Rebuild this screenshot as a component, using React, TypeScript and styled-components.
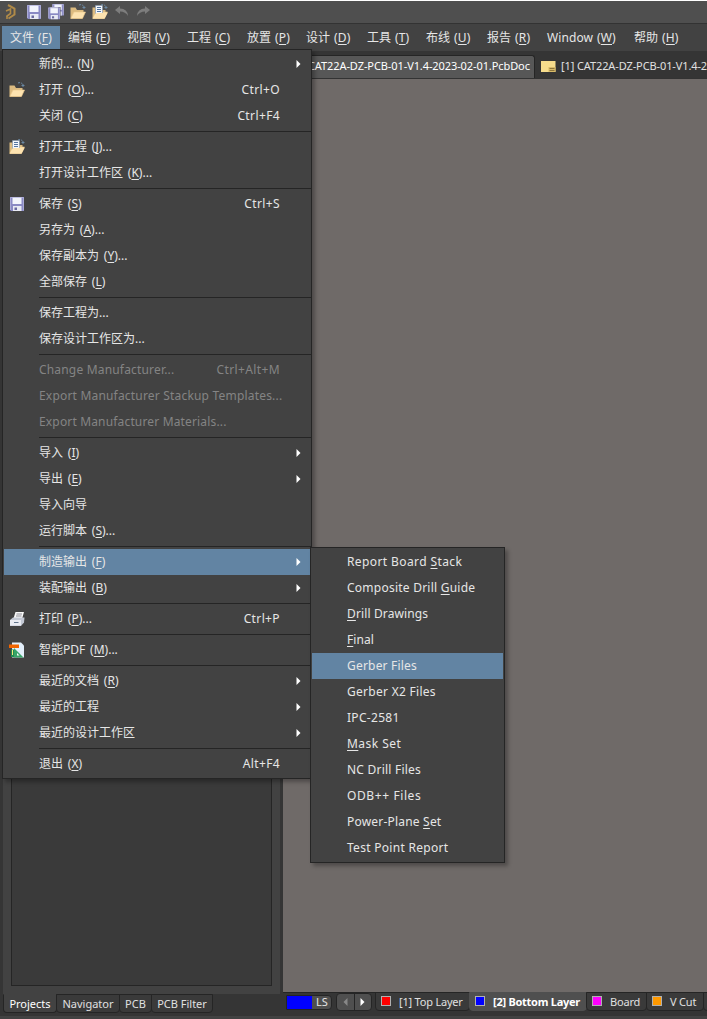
import React from 'react';
import styled, { createGlobalStyle } from 'styled-components';

const Global = createGlobalStyle`
  * { box-sizing: border-box; }
  body { margin: 0; background: #333; }
`;

const App = styled.div`
  position: relative;
  display: flex;
  flex-direction: column;
  width: 707px;
  height: 1019px;
  overflow: hidden;
  background: #353535;
  border-top: 1px solid #fff;
  color: #e6e6e6;
  font: 12px "Noto Sans", "Noto Sans CJK SC", sans-serif;
  white-space: nowrap;
`;

const QuickBar = styled.div`
  display: flex;
  height: 23px;
  flex: none;
  background: #4f4f4f;
  border-bottom: 1px solid #333;
  align-items: flex-start;
  padding: 3px 0 0 4px;
`;

const QuickSlot = styled.div<{ $w: number }>`
  width: ${p => p.$w}px;
  height: 16px;
  flex: none;
`;

const MenuBar = styled.nav`
  display: flex;
  height: 27px;
  flex: none;
  padding: 2px 0 0 2px;
  background: #424242;
`;

const MenuTitle = styled.div<{ $w: number; $active?: boolean }>`
  width: ${p => p.$w}px;
  flex: none;
  padding-left: 8px;
  line-height: 24px;
  letter-spacing: 0.1px;
  word-spacing: 0.7px;
  background: ${p => (p.$active ? '#6284a3' : 'transparent')};
`;

const DocTabs = styled.div`
  display: flex;
  height: 28px;
  flex: none;
  background: #353535;
  padding: 4px 0 0 283px;
  border-bottom: 1px solid #333;
`;

const DocTab = styled.div<{ $active?: boolean; $w: number }>`
  width: ${p => p.$w}px;
  flex: none;
  display: flex;
  align-items: center;
  gap: 5px;
  padding-left: ${p => (p.$active ? 25 : 5)}px;
  padding-bottom: ${p => (p.$active ? 3 : 2)}px;
  background: ${p => (p.$active ? '#575757' : 'transparent')};
  border: solid #252525;
  border-width: ${p => (p.$active ? '1px 1px 0 0' : '0')};
  border-radius: 0 3px 0 0;
  font-size: 11px;
  letter-spacing: ${p => (p.$active ? -0.09 : -0.11)}px;
  color: ${p => (p.$active ? '#fff' : '#e0e0e0')};
`;

const Main = styled.div`
  display: flex;
  flex: 1;
`;

const SidePanel = styled.aside`
  width: 283px;
  flex: none;
  display: flex;
  flex-direction: column;
  padding-left: 3px;
  background: #353535;
`;

const PanelBody = styled.div`
  width: 277px;
  height: 915px;
  padding: 0 8px 8px;
  background: #424242;
`;

const PanelTree = styled.div`
  width: 261px;
  height: 907px;
  background: #3a3a3a;
  border: 1px solid #252525;
`;

const PanelTabs = styled.div`
  display: flex;
  height: 19px;
`;

const PanelTab = styled.div<{ $w: number; $active?: boolean }>`
  width: ${p => p.$w}px;
  flex: none;
  margin-right: -1px;
  text-align: center;
  line-height: 17px;
  font-size: 11px;
  border: 1px solid #252525;
  border-top-color: ${p => (p.$active ? '#424242' : '#252525')};
  border-radius: 0 0 4px 4px;
  background: ${p => (p.$active ? '#424242' : '#3a3a3a')};
  color: ${p => (p.$active ? '#fff' : '#e0e0e0')};
`;

const Workspace = styled.section`
  flex: 1;
  display: flex;
  flex-direction: column;
`;

const Canvas = styled.div`
  height: 914px;
  flex: none;
  background: #6f6a68;
  border-bottom: 1px solid #252525;
`;

const LayerBar = styled.div`
  display: flex;
  align-items: flex-start;
  height: 19px;
  padding-left: 3px;
`;

const LayerSet = styled.div`
  display: flex;
  width: 46px;
  height: 15px;
  margin: 2px 4px 0 0;
  border: 1px solid #252525;
  border-radius: 0 4px 4px 0;
  background: #4f4f4f;
  overflow: hidden;
  line-height: 12px;
  font-size: 11px;
`;

const LayerSetColor = styled.div`
  width: 25px;
  margin-right: 4px;
  background: #00f;
`;

const Pager = styled.div`
  display: flex;
  width: 36px;
  height: 18px;
  margin-right: 3px;
  border: 1px solid #252525;
  border-radius: 4px;
  background: #4f4f4f;
`;

const PagerButton = styled.div`
  flex: 1;
  display: flex;
  align-items: center;
  justify-content: center;
  padding-bottom: 1px;
  & + & { border-left: 1px solid #252525; }
`;

const LayerTab = styled.div<{ $w: number; $active?: boolean }>`
  display: flex;
  align-items: center;
  width: ${p => p.$w}px;
  height: 19px;
  flex: none;
  margin: -1px -1px 0 0;
  padding: 0 0 1px 5px;
  font-size: 11px;
  letter-spacing: ${p => (p.$active ? -0.26 : -0.2)}px;
  font-weight: ${p => (p.$active ? 700 : 400)};
  color: ${p => (p.$active ? '#fff' : '#e0e0e0')};
  border: 1px solid ${p => (p.$active ? '#4f4f4f' : '#252525')};
  border-radius: 0 0 4px 4px;
  background: ${p => (p.$active ? '#4f4f4f' : '#3a3a3a')};
`;

const Swatch = styled.span<{ $c: string }>`
  width: 10px;
  height: 10px;
  margin-right: 8px;
  border: 1px solid #b0b0b0;
  background: ${p => p.$c};
`;

const StatusLine = styled.div`
  position: absolute;
  left: 0;
  right: 0;
  bottom: 0;
  height: 3px;
  background: #424242;
`;

const Popup = styled.div<{ $x: number; $y: number; $w: number }>`
  position: absolute;
  left: ${p => p.$x}px;
  top: ${p => p.$y}px;
  width: ${p => p.$w}px;
  padding: 1px;
  background: #424242;
  border: 1px solid #252525;
  box-shadow: 3px 3px 4px rgba(0, 0, 0, 0.3);
`;

const Item = styled.div<{ $hot?: boolean; $off?: boolean }>`
  display: flex;
  align-items: center;
  height: 26px;
  background: ${p => (p.$hot ? '#6284a3' : 'transparent')};
  color: ${p => (p.$off ? '#848484' : '#e6e6e6')};
`;

const IconSlot = styled.div`
  width: 35px;
  padding-left: 5px;
  height: 16px;
  flex: none;
`;

const Label = styled.span<{ $ls?: number }>`
  flex: 1;
  letter-spacing: ${p => p.$ls ?? 0}px;
  word-spacing: ${p => (p.$ls === undefined ? 1.7 : 0)}px;
  line-height: 26px;
`;

const Shortcut = styled.span`
  letter-spacing: 0.38px;
  line-height: 26px;
  margin-right: 30px;
`;

const ArrowSlot = styled.span`
  display: flex;
  width: 14px;
`;

const Separator = styled.div`
  height: 5px;
  margin: 0 -1px 0 35px;
  padding-top: 2px;
  &::before { content: ''; display: block; height: 1px; background: #252525; }
`;

const Key = styled.span`
  text-decoration: underline;
  text-underline-offset: 2px;
  text-decoration-thickness: 1px;
  text-decoration-skip-ink: none;
`;

const Glyph = styled.svg`
  display: block;
  flex: none;
`;

type IconName = 'logo' | 'save' | 'saveAll' | 'open' | 'openDoc' | 'undo' | 'redo' | 'print' | 'pdf' | 'note';

const Icon = ({ name }: { name: IconName }) => {
  const folder = (
    <>
      <path d="M.5 3.500V14.500H12L13.500 8V6H7L5.500 3.500Z" fill="#dcbb80" />
      <path d="M.8 14.500L4 8H15.500L12.500 14.500Z" fill="#fde3b0" stroke="#ecc98c" strokeWidth=".6" />
      <path d="M9 1Q11.500 0 13.500 2" fill="none" stroke="#6d8ca8" strokeDasharray="2 1" />
      <path d="M12.500 3.500H15.500M14 2V5" stroke="#6d8ca8" strokeWidth=".9" />
    </>
  );
  const disk = (
    <>
      <path d="M1 1H15V15H2L1 14Z" fill="#8a8ac4" />
      <path d="M3.500 1H12.500V8H3.500Z" fill="#f3f5fc" />
      <path d="M4 10H12.500V15H4Z" fill="#e8eaf4" />
      <path d="M5.500 11.500H8V14H5.500Z" fill="#6969a0" />
      <path d="M1.500 14V1.500H14.500V14.500" fill="none" stroke="#b4b4dc" strokeWidth=".8" />
    </>
  );
  return (
    <Glyph width="16" height="16" viewBox="0 0 16 16">
      {name === 'logo' && (
        <g fill="none" stroke="#b08a48" strokeWidth="2">
          <path d="M4 1L10.500 4.500V10.500L4.500 14.500" />
          <path d="M2 7L6.500 5V9.500L2.500 12.500" strokeWidth="1.600" />
          <path d="M3 12V15" strokeWidth="1.600" />
        </g>
      )}
      {name === 'save' && disk}
      {name === 'saveAll' && (
        <>
          <g transform="translate(3.500 -.7) scale(.82)">{disk}</g>
          <path d="M0 3H12.500V15.500H0Z" fill="#4f4f4f" />
          <g transform="translate(-.6 2.600) scale(.84)">{disk}</g>
        </>
      )}
      {name === 'open' && folder}
      {name === 'openDoc' && (
        <>
          {folder}
          <path d="M3.500 1.500H10.500V10H3.500Z" fill="#f4f7fb" stroke="#8296ac" strokeWidth=".6" />
          <path d="M5 3.500H9M5 5.500H9M5 7.500H9" stroke="#5575a0" />
          <path d="M.8 14.500L4 9H15.500L12.500 14.500Z" fill="#fde3b0" />
        </>
      )}
      {name === 'undo' && <path d="M1 6L6 2V4.500Q13.500 4.500 14 12Q11.500 7.500 6 7.500V10Z" fill="#7d7d7d" />}
      {name === 'redo' && <path d="M15 6L10 2V4.500Q2.500 4.500 2 12Q4.500 7.500 10 7.500V10Z" fill="#7d7d7d" />}
      {name === 'print' && (
        <>
          <path d="M4.500 7.500L6.500 1H15L13 8Z" fill="#fafafa" />
          <path d="M7.500 3H13M7 5H12.500" stroke="#8c8c96" />
          <path d="M1 9L4 6.500H15.500L15 11.500L12 15H1Z" fill="#c3c8d4" />
          <path d="M1 9H12V14.500H1Z" fill="#e9ebf2" />
          <path d="M5 11.500H9.500" stroke="#62758c" />
        </>
      )}
      {name === 'pdf' && (
        <>
          <path d="M3 .5H12L15 3.500V15.500H3Z" fill="#e3effa" />
          <path d="M0 2.500H10V6H0Z" fill="#f06400" />
          <path d="M5 6L14.500 15.500H5Z" fill="#38a568" />
          <path d="M8 11L10.500 13.500H8Z" fill="#fff" />
          <path d="M2 7.500H5V15H2Z" fill="#218b51" />
          <path d="M3.500 8V13" stroke="#f4ec7e" />
        </>
      )}
      {name === 'note' && (
        <>
          <path d="M1 3H15.500V14H1Z" fill="#f6dc8c" />
          <path d="M8.500 9H15.500V14H8.500Z" fill="#d9bb69" />
          <path d="M9.500 10.500H14.500M9.500 12.500H14.500" stroke="#7b6530" strokeWidth=".8" />
        </>
      )}
    </Glyph>
  );
};

const Triangle = ({ left, dim }: { left?: boolean; dim?: boolean }) => (
  <Glyph width="5" height="8" viewBox="0 0 5 8">
    <path d={left ? 'M4.500 0V8L.5 4Z' : 'M.5 0V8L4.500 4Z'} fill={dim ? '#888' : '#fff'} />
  </Glyph>
);

// An ampersand marks the access key that follows it.
const Mnemonic = ({ text }: { text: string }) => {
  const i = text.indexOf('&');
  if (i < 0) return <>{text}</>;
  return <>{text.slice(0, i)}<Key>{text[i + 1]}</Key>{text.slice(i + 2)}</>;
};

interface Entry { text: string; keys?: string; icon?: IconName; arrow?: boolean; hot?: boolean; off?: boolean; ls?: number }

const fileMenu: (Entry | null)[] = [
  { text: '新的... (&N)', arrow: true },
  { text: '打开 (&O)...', keys: 'Ctrl+O', icon: 'open' },
  { text: '关闭 (&C)', keys: 'Ctrl+F4' },
  null,
  { text: '打开工程 (&J)...', icon: 'openDoc' },
  { text: '打开设计工作区 (&K)...' },
  null,
  { text: '保存 (&S)', keys: 'Ctrl+S', icon: 'save' },
  { text: '另存为 (&A)...' },
  { text: '保存副本为 (&Y)...' },
  { text: '全部保存 (&L)' },
  null,
  { text: '保存工程为...' },
  { text: '保存设计工作区为...' },
  null,
  { text: 'Change Manufacturer...', keys: 'Ctrl+Alt+M', off: true, ls: 0.18 },
  { text: 'Export Manufacturer Stackup Templates...', off: true, ls: 0.19 },
  { text: 'Export Manufacturer Materials...', off: true, ls: 0.16 },
  null,
  { text: '导入 (&I)', arrow: true },
  { text: '导出 (&E)', arrow: true },
  { text: '导入向导' },
  { text: '运行脚本 (&S)...' },
  null,
  { text: '制造输出 (&F)', arrow: true, hot: true },
  { text: '装配输出 (&B)', arrow: true },
  null,
  { text: '打印 (&P)...', keys: 'Ctrl+P', icon: 'print' },
  null,
  { text: '智能PDF (&M)...', icon: 'pdf' },
  null,
  { text: '最近的文档 (&R)', arrow: true },
  { text: '最近的工程', arrow: true },
  { text: '最近的设计工作区', arrow: true },
  null,
  { text: '退出 (&X)', keys: 'Alt+F4' },
];

const outputMenu: Entry[] = ([
  ['Report Board &Stack', 0.4],
  ['Composite Drill &Guide', 0.24],
  ['&Drill Drawings', 0.13],
  ['&Final', 0.05],
  ['Gerber Files', 0.2],
  ['Gerber X2 Files', 0.28],
  ['IPC-2581', 0.3],
  ['&Mask Set', 0.45],
  ['NC Drill Files', 0.22],
  ['ODB++ Files', 0.6],
  ['Power-Plane &Set', 0.2],
  ['Test Point Report', 0.29],
] as [string, number][]).map(([text, ls]) => ({ text, ls, hot: text === 'Gerber Files' }));

const titles: [string, number][] = [
  ['文件 (&F)', 58], ['编辑 (&E)', 59], ['视图 (&V)', 60], ['工程 (&C)', 60], ['放置 (&P)', 59],
  ['设计 (&D)', 61], ['工具 (&T)', 59], ['布线 (&U)', 61], ['报告 (&R)', 60], ['Window (&W)', 87], ['帮助 (&H)', 60],
];

const quick: [IconName, number][] = [
  ['logo', 22], ['save', 22], ['saveAll', 22], ['open', 22], ['openDoc', 22], ['undo', 21], ['redo', 22],
];

const MenuPopup = ({ x, y, w, entries }: { x: number; y: number; w: number; entries: (Entry | null)[] }) => (
  <Popup $x={x} $y={y} $w={w}>
    {entries.map((e, i) =>
      e ? (
        <Item key={i} $hot={e.hot} $off={e.off}>
          <IconSlot>{e.icon && <Icon name={e.icon} />}</IconSlot>
          <Label $ls={e.ls}><Mnemonic text={e.text} /></Label>
          {e.keys && <Shortcut>{e.keys}</Shortcut>}
          {e.arrow && <ArrowSlot><Triangle /></ArrowSlot>}
        </Item>
      ) : (
        <Separator key={i} />
      ),
    )}
  </Popup>
);

export default () => (
  <App>
    <Global />
    <QuickBar>
      {quick.map(([name, w]) => <QuickSlot key={name} $w={w}><Icon name={name} /></QuickSlot>)}
    </QuickBar>
    <MenuBar>
      {titles.map(([t, w], i) => <MenuTitle key={t} $w={w} $active={i === 0}><Mnemonic text={t} /></MenuTitle>)}
    </MenuBar>
    <DocTabs>
      <DocTab $active $w={252}>CAT22A-DZ-PCB-01-V1.4-2023-02-01.PcbDoc</DocTab>
      <DocTab $w={220}><Icon name="note" />[1] CAT22A-DZ-PCB-01-V1.4-2023-02-01.PcbDoc</DocTab>
    </DocTabs>
    <Main>
      <SidePanel>
        <PanelBody><PanelTree /></PanelBody>
        <PanelTabs>
          <PanelTab $active $w={54}>Projects</PanelTab>
          <PanelTab $w={64}>Navigator</PanelTab>
          <PanelTab $w={33}>PCB</PanelTab>
          <PanelTab $w={62}>PCB Filter</PanelTab>
        </PanelTabs>
      </SidePanel>
      <Workspace>
        <Canvas />
        <LayerBar>
          <LayerSet><LayerSetColor />LS</LayerSet>
          <Pager>
            <PagerButton><Triangle left dim /></PagerButton>
            <PagerButton><Triangle /></PagerButton>
          </Pager>
          <LayerTab $w={95}><Swatch $c="#f00" />[1] Top Layer</LayerTab>
          <LayerTab $w={118} $active><Swatch $c="#00f" />[2] Bottom Layer</LayerTab>
          <LayerTab $w={61}><Swatch $c="#f0f" />Board</LayerTab>
          <LayerTab $w={58}><Swatch $c="#f90" />V Cut</LayerTab>
          <LayerTab $w={40} />
        </LayerBar>
      </Workspace>
    </Main>
    <StatusLine />
    <MenuPopup x={2} y={48} w={310} entries={fileMenu} />
    <MenuPopup x={310} y={546} w={195} entries={outputMenu} />
  </App>
);
